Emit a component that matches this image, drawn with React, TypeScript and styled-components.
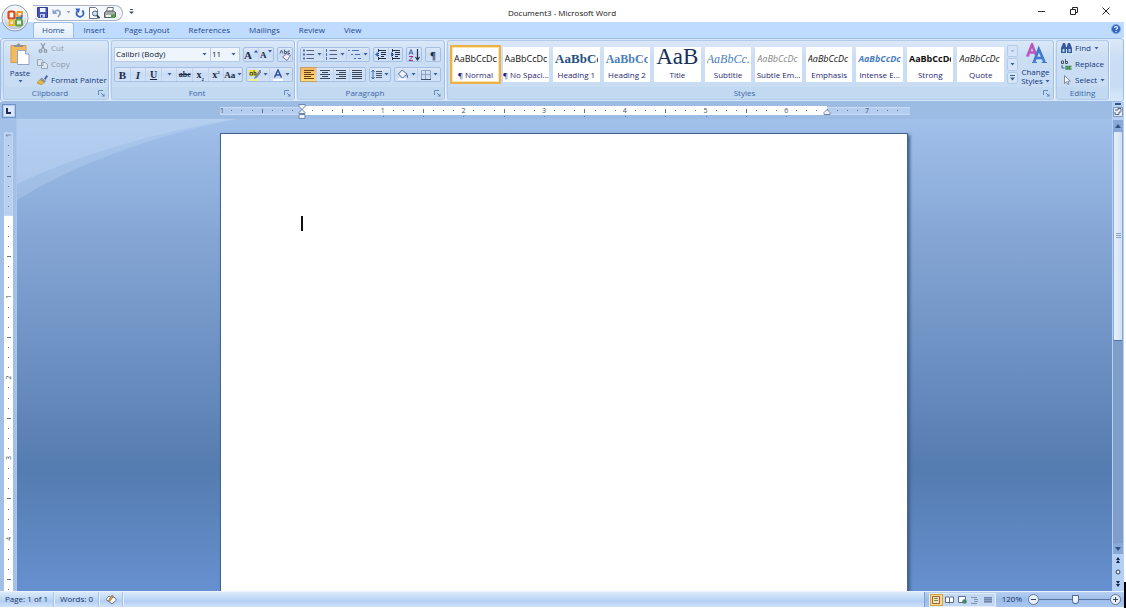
import React from "react";
import styled, { createGlobalStyle, css } from "styled-components";

const GlobalStyle = createGlobalStyle`
  * { box-sizing: border-box; }
  html, body, #root { height: 100%; }
  body { margin: 0; background: #fff; overflow: hidden; }
  body, button, select, input { font-family: "Open Sans", "Noto Sans", sans-serif; font-size: 8px; line-height: 12px; }
  button { padding: 0; margin: 0; border: 0; background: none; color: inherit; }
  svg { display: block; flex: none; }
`;

const Shell = styled.div`
  position: relative;
  display: flex;
  flex-direction: column;
  height: 100%;
  padding: 0 2px 1px 0;
  color: #17387a;
`;

/* Title bar */
const TitleBar = styled.header`
  display: grid;
  grid-template-columns: 1fr auto 1fr;
  align-items: center;
  height: 22px;
  flex: none;
  background: #fff;
`;
const QuickAccess = styled.div`
  display: flex;
  align-items: center;
  padding-left: 32px;
`;
const QuickTools = styled.div`
  display: flex;
  align-items: center;
  gap: 4px;
  height: 16px;
  margin-top: 3px;
  padding: 0 6px 0 4px;
  border: 1px solid #a9b3c4;
  border-left-color: #fff;
  border-radius: 2px 9px 9px 10px;
  background: #f4f7fc;
`;
const QuickMenu = styled.button`
  margin: 2px 0 0 6px;
`;
const WindowTitle = styled.h1`
  margin: 0;
  padding-top: 3px;
  font-size: 8px;
  font-weight: 400;
  color: #111;
`;
const WindowControls = styled.div`
  display: flex;
  justify-content: flex-end;
  gap: 22px;
  padding-right: 13px;
`;
const OfficeButton = styled.button`
  position: absolute;
  left: 1px;
  top: 4px;
  z-index: 2;
`;

/* Tabs */
const TabRow = styled.nav`
  display: flex;
  align-items: flex-end;
  gap: 1px;
  height: 16px;
  flex: none;
  padding: 0 3px 0 33px;
  background: #bfdbff;
`;
const Tab = styled.button<{ $active?: boolean }>`
  height: 16px;
  padding: 0 8px 1px;
  line-height: 14px;
  color: #25498c;
  border: 1px solid transparent;
  border-bottom: 0;
  border-radius: 3px 3px 0 0;
  ${(p) => p.$active && css`background: linear-gradient(#f4f9ff, #dfecfb); border-color: #9dbbe3;`}
`;
const HelpButton = styled.button`
  margin: 0 0 4px auto;
`;

/* Ribbon */
const Ribbon = styled.section`
  display: flex;
  gap: 2px;
  height: 64px;
  flex: none;
  padding: 1px 14px 1px 2px;
  border: 1px solid #9dbce6;
  border-radius: 3px;
  background: linear-gradient(#dce9f8, #cbdef4 30%, #c8dcf4 75%, #d8e8fb);
`;
const Group = styled.section<{ $grow?: boolean; $width?: number }>`
  display: flex;
  flex-direction: column;
  ${(p) => (p.$grow ? "flex: 1; min-width: 0;" : `flex: none; width: ${p.$width}px;`)}
  border: 1px solid #b3cbea;
  border-right-color: #a3bfe3;
  border-radius: 3px;
  box-shadow: 1px 0 0 #edf5fe;
  overflow: hidden;
`;
const GroupBody = styled.div<{ $pad?: string }>`
  display: flex;
  flex: 1;
  min-height: 0;
  padding: ${(p) => p.$pad ?? "0"};
`;
const GroupTitle = styled.footer<{ $launch: boolean }>`
  display: grid;
  grid-template-columns: ${(p) => (p.$launch ? "1fr 12px" : "1fr")};
  align-items: center;
  height: 12px;
  background: #c1d9f1;
  color: #3d66a8;
  text-align: center;
  h2 { margin: 0; font-size: 8px; font-weight: 400; line-height: 12px; }
  button { justify-self: end; padding-right: 3px; }
`;
const TallButton = styled.button<{ $width: number }>`
  display: flex;
  flex-direction: column;
  align-items: center;
  width: ${(p) => p.$width}px;
  flex: none;
  padding-top: 2px;
  line-height: 9px;
  white-space: nowrap;
`;
const TallCaption = styled.span`
  padding: 3px 0;
`;
const CommandList = styled.div`
  display: flex;
  flex-direction: column;
  gap: 2px;
  padding-left: 1px;
`;
const Command = styled.button<{ $off?: boolean }>`
  display: flex;
  align-items: center;
  height: 14px;
  white-space: nowrap;
  color: ${(p) => (p.$off ? "#8f99a8" : "#17387a")};
  gap: 3px;
`;
const CommandIcon = styled.span`
  display: flex;
  justify-content: center;
  width: 11px;
`;
const Rows = styled.div`
  display: flex;
  flex-direction: column;
  gap: 5px;
  width: 100%;
`;
const Row = styled.div`
  display: flex;
  gap: 3px;
  height: 15px;
`;
const ButtonSet = styled.div<{ $width: number }>`
  display: flex;
  align-items: stretch;
  width: ${(p) => p.$width}px;
  border: 1px solid #a4bfe3;
  border-radius: 2px;
  background: linear-gradient(#dbe8f8, #c9dcf4 50%, #d2e3f8);
`;
const ToolButton = styled.button<{ $on?: boolean }>`
  display: flex;
  flex: 1;
  align-items: center;
  justify-content: center;
  gap: 2px;
  color: #1d2c48;
  & + & { border-left: 1px solid #c0d3ee; }
  ${(p) => p.$on && css`background: linear-gradient(#f6b766, #ffd978); box-shadow: 0 0 0 1px #c2a16b;`}
`;
const Glyph = styled.span<{ $size?: number; $weight?: number; $italic?: boolean; $line?: string }>`
  font-family: "Liberation Serif", serif;
  font-size: ${(p) => p.$size ?? 10}px;
  font-weight: ${(p) => p.$weight ?? 700};
  font-style: ${(p) => (p.$italic ? "italic" : "normal")};
  text-decoration: ${(p) => p.$line ?? "none"};
  line-height: 12px;
  sub, sup { font-size: 5px; line-height: 1px; }
`;
const ComboPair = styled.div`
  display: flex;
`;
const Combo = styled.label<{ $width: number }>`
  display: grid;
  grid-template-columns: 1fr 8px;
  align-items: center;
  width: ${(p) => p.$width}px;
  border: 1px solid #b6cbe8;
  background: #eef5fd;
  & + & { border-left: 0; }
  & > * { grid-row: 1; }
  & > svg { grid-column: 2; pointer-events: none; }
`;
const Select = styled.select`
  grid-column: 1 / 3;
  appearance: none;
  width: 100%;
  height: 13px;
  padding: 0 0 1px 1px;
  border: 0;
  background: transparent;
  color: #111c30;
`;

/* Style gallery */
const Gallery = styled.div`
  display: flex;
  flex: 1;
  gap: 4px;
  min-width: 0;
  padding: 4px 3px 0 0;
`;
const StyleTile = styled.button<{ $on?: boolean }>`
  display: flex;
  flex-direction: column;
  align-items: center;
  flex: 1 1 0;
  min-width: 0;
  height: 35px;
  margin-top: 2px;
  padding: 0 2px;
  background: #fff;
  overflow: hidden;
  ${(p) => p.$on && css`outline: 2px solid #eeb04b; box-shadow: inset 0 0 0 1px #ffe6a0;`}
`;
const Sample = styled.span<{ $face?: string; $size?: number; $color?: string; $bold?: boolean; $italic?: boolean }>`
  width: 100%;
  height: 22px;
  overflow: hidden;
  white-space: nowrap;
  text-align: left;
  line-height: ${(p) => ((p.$size ?? 9) > 20 ? 20 : 24)}px;
  font-family: ${(p) => (p.$face === "serif" ? `"Liberation Serif", serif` : `"Open Sans", sans-serif`)};
  font-size: ${(p) => p.$size ?? 9}px;
  color: ${(p) => p.$color ?? "#111"};
  font-weight: ${(p) => (p.$bold ? 700 : 400)};
  font-style: ${(p) => (p.$italic ? "italic" : "normal")};
`;
const TileName = styled.span`
  line-height: 12px;
  white-space: nowrap;
  color: #1f1f70;
`;
const GalleryScroll = styled.div`
  display: flex;
  flex-direction: column;
  gap: 1px;
  width: 11px;
  height: 39px;
  margin-top: 4px;
  button {
    display: flex;
    flex: 1;
    align-items: center;
    justify-content: center;
    border: 1px solid #b4cbea;
    border-radius: 2px;
    background: #d5e4f7;
  }
`;

/* Rulers and work area */
const Main = styled.main`
  display: grid;
  grid-template-columns: 17px 1fr 12px;
  grid-template-rows: 17px 1fr;
  flex: 1;
  min-height: 0;
`;
const Corner = styled.div`
  display: flex;
  align-items: center;
  justify-content: center;
  background: #9dbce4;
`;
const TabStop = styled.button`
  display: flex;
  width: 14px;
  height: 14px;
  align-items: center;
  justify-content: center;
  border: 1px solid #6f93c6;
  background: #dbe8f9;
  box-shadow: inset 0 0 0 1px #b5cdec;
`;
const RulerBar = styled.div`
  display: flex;
  justify-content: center;
  overflow: hidden;
  background: #9dbce4;
`;
const SideRuler = styled.div`
  overflow: hidden;
  padding-left: 4px;
  background: #a3c1e8;
  border-right: 1px solid #a9c6ee;
`;
const Desk = styled.div`
  position: relative;
  display: flex;
  justify-content: center;
  overflow: hidden;
  padding: 14px 1px 0 0;
  background: linear-gradient(#a1c0ea, #84a5d4 26%, #557cb0 74%, #6690cf);
`;
const Sweep = styled.svg`
  position: absolute;
  left: 0;
  top: 0;
`;
const Paper = styled.article`
  position: relative;
  width: 688px;
  padding: 82px 80px 0;
  border: solid #43648f;
  border-width: 1px 1px 0 1px;
  background: #fff;
  box-shadow: 2px 2px 3px #3c5f8f;
`;
const TextCursor = styled.div`
  width: 2px;
  height: 15px;
  background: #111;
`;
const ScrollColumn = styled.div`
  display: flex;
  flex-direction: column;
  align-items: center;
  padding: 1px;
  background: #b4d0f5;
`;
const ScrollButton = styled.button<{ $dark?: boolean }>`
  display: flex;
  flex: none;
  align-items: center;
  justify-content: center;
  width: 10px;
  height: ${(p) => (p.$dark ? 11 : 12)}px;
  background: ${(p) => (p.$dark ? "#88a9d7" : "transparent")};
`;
const Track = styled.div`
  flex: 1;
  width: 10px;
  background: #7f9fca;
`;
const Thumb = styled.div`
  display: flex;
  align-items: center;
  justify-content: center;
  height: 51%;
  border: 1px solid #8aa8d2;
  border-bottom-color: #56749f;
  border-radius: 2px;
  background: linear-gradient(90deg, #e8f1fc, #d0e0f5);
`;

/* Status bar */
const StatusBar = styled.footer`
  display: flex;
  align-items: stretch;
  height: 16px;
  flex: none;
  border-top: 1px solid #e9f2fd;
  background: linear-gradient(#dceafb, #c2daf7 40%, #b3cff3 60%, #cfe2fa);
  color: #1c3766;
  line-height: 14px;
`;
const StatusItem = styled.div`
  display: flex;
  align-items: center;
  padding: 0 5px 1px;
  border-right: 1px solid #a7c3e8;
  box-shadow: 1px 0 0 #e4effc;
  & + & { padding-left: 6px; }
`;
const StatusRight = styled.div`
  display: flex;
  align-items: center;
  gap: 6px;
  margin-left: auto;
  padding: 0 3px 0 4px;
  border-left: 1px solid #7f9fcc;
  background: linear-gradient(#b7d0f2, #9dbde9 50%, #a9c7ef);
`;
const Views = styled.div`
  display: flex;
  border: 1px solid #e1edfb;
  background: #c3d8f3;
`;
const ViewButton = styled.button<{ $on?: boolean }>`
  display: flex;
  align-items: center;
  justify-content: center;
  width: 13px;
  height: 12px;
  ${(p) => p.$on && css`background: #fcd68a; box-shadow: inset 0 0 0 1px #d6a24c;`}
`;
const Zoom = styled.label`
  display: flex;
  align-items: center;
`;
const ZoomValue = styled.span`
  padding: 0 6px 1px 0;
`;
const Slider = styled.input`
  appearance: none;
  width: 71px;
  height: 12px;
  margin: 0;
  background: linear-gradient(#56759f, #56759f) center / 100% 1px no-repeat;
  &::-webkit-slider-thumb {
    appearance: none;
    width: 7px;
    height: 9px;
    border: 1px solid #4d6c9b;
    border-radius: 1px 1px 4px 4px;
    background: #eef4fc;
  }
`;
const WindowEdge = styled.div`
  position: absolute;
  right: 0;
  bottom: 0;
  width: 2px;
  height: 26px;
  background: #000;
`;

const InlineCaret = styled.svg`
  display: inline;
`;

const Caret = ({ c = "#3b5f99" }: { c?: string }) => (
  <svg width="5" height="3" viewBox="0 0 5 3"><path d="M.5 0h4L2.500 2.500z" fill={c} /></svg>
);
const Launcher = () => (
  <svg width="7" height="7" viewBox="0 0 7 7" fill="none" stroke="#6888b8"><path d="M.5 5V.5H5M3 3l2.500 2.500" /><path d="M6.500 3.500v3h-3z" fill="#6888b8" stroke="none" /></svg>
);

const OfficeLogo = () => (
  <svg width="28" height="28" viewBox="0 0 28 28">
    <defs>
      <radialGradient id="orb" cx=".5" cy=".3" r=".75">
        <stop offset="0" stopColor="#fff" /><stop offset=".55" stopColor="#e3e8f1" /><stop offset="1" stopColor="#9aa9c2" />
      </radialGradient>
    </defs>
    <circle cx="14" cy="14" r="13" fill="url(#orb)" stroke="#8798b5" />
    <circle cx="14" cy="14" r="12" fill="none" stroke="#f8fafd" />
    <g fill="none" strokeWidth="2.200">
      <rect x="7.500" y="7.500" width="6" height="7" rx="1.500" stroke="#d9481c" />
      <path d="M14.500 10.500h2V8h4.500v4.500h-5.500" stroke="#ef9c28" strokeWidth="1.800" />
      <path d="M14.500 14h6v-3" stroke="#3a74c4" strokeWidth="1.800" />
      <path d="M13 15.500v5.500H8.500v-4.500h3" stroke="#f0b420" strokeWidth="1.800" />
      <rect x="15" y="15.500" width="6" height="6" rx="1.500" stroke="#64a33a" strokeWidth="2" />
    </g>
  </svg>
);
const SaveIcon = () => (
  <svg width="11" height="11" viewBox="0 0 11 11"><path d="M.5.5h10v10h-9l-1-1z" fill="#4655b5" stroke="#303c93" /><path d="M3 1h5.500v4H3z" fill="#f2f5fc" /><path d="M3 7h5v3.500H3z" fill="#c9cfe6" /><path d="M4 8h1.500v2H4z" fill="#303c93" /></svg>
);
const UndoIcon = () => (
  <svg width="10" height="10" viewBox="0 0 10 10" fill="none" stroke="#8fa3c7" strokeWidth="1.800"><path d="M2.500 3.800C4.500 1.500 8 2 8.200 4.800c.1 1.800-1 3.200-2.400 4.200" /><path d="M.5 1v5h5z" fill="#8fa3c7" stroke="none" /></svg>
);
const RedoIcon = () => (
  <svg width="10" height="10" viewBox="0 0 10 10" fill="none" stroke="#3464bd" strokeWidth="1.800"><path d="M2.500 2.800A3.500 3.500 0 1 0 7.200 2.500" /><path d="M0 .5h5L3.800 5z" fill="#3464bd" stroke="none" /></svg>
);
const PreviewIcon = () => (
  <svg width="11" height="12" viewBox="0 0 11 12" fill="none"><path d="M.5.5h6l2 2v9h-8z" fill="#fff" stroke="#68768e" /><circle cx="6" cy="6.500" r="2.500" fill="#cfe5fa" stroke="#4d5f7d" /><path d="M8 8.500l2.500 2.500" stroke="#3d4653" strokeWidth="1.800" /></svg>
);
const PrinterIcon = () => (
  <svg width="12" height="12" viewBox="0 0 12 12"><path d="M3.500.5h6l-1 4h-6z" fill="#fff" stroke="#70757c" /><path d="M.5 5.500l2-1.500h7l2 1.500v4l-2 1h-9z" fill="#a6aaa6" stroke="#55595c" /><path d="M2 8h6v2H2z" fill="#eceef0" /><path d="M7 7.500h4v3.500H7z" fill="#4c9b45" /></svg>
);
const PasteIcon = () => (
  <svg width="20" height="22" viewBox="0 0 20 22"><path d="M1 2.500h15v17H1z" fill="#f2bb60" stroke="#d39c42" /><path d="M4 4h9V2h-2.500L8.500 0 6.500 2H4z" fill="#8a8f99" /><path d="M7.500 7.500h8l3.500 3.500v10.500H7.500z" fill="#fff" stroke="#93a5c3" /><path d="M15.500 7.500V11H19" fill="#dfe7f4" stroke="#93a5c3" /></svg>
);
const CutIcon = () => (
  <svg width="10" height="10" viewBox="0 0 10 10" fill="none" stroke="#8f99a8" strokeWidth="1.200"><path d="M3 0l3.500 6.500M7 0L3.500 6.500" /><circle cx="2.500" cy="8" r="1.400" /><circle cx="7.500" cy="8" r="1.400" /></svg>
);
const CopyIcon = () => (
  <svg width="11" height="10" viewBox="0 0 11 10" fill="#dfe5ee" stroke="#99a4b5"><path d="M.5.5h4l1.500 1.500v4.500h-5.500zM4.500 3.500h4l2 2v4h-6z" /></svg>
);
const BrushIcon = () => (
  <svg width="11" height="10" viewBox="0 0 11 10"><path d="M7 3.500L9.500 0 11 1.200 8.500 5z" fill="#4f66a5" /><path d="M4.500 2.500l4.500 3.500-1.500 2L3 4.500z" fill="#8a94a8" /><path d="M3 4.500l4 3L4.500 10 0 8z" fill="#e6ba3e" stroke="#a8802a" strokeWidth=".6" /></svg>
);
const ListIcon = ({ kind }: { kind: "dot" | "num" | "tree" }) => (
  <svg width="13" height="11" viewBox="0 0 13 11" stroke="#4b6fae" fill="none">
    {kind === "tree" ? (
      <path d="M0 1.500h2M4 1.500h7M3 5.500h2M7 5.500h5M6 9.500h2M10 9.500h3" />
    ) : (
      <>
        <path d="M4.500 1.500H12M4.500 5.500H12M4.500 9.500H12" stroke="#51617c" />
        <path d={kind === "dot" ? "M1 1.500h2M1 5.500h2M1 9.500h2" : "M1.500 0v3M1.500 4v3M1.500 8v3"} strokeWidth={kind === "dot" ? 2 : 1} />
      </>
    )}
  </svg>
);
const IndentIcon = ({ right }: { right?: boolean }) => (
  <svg width="12" height="11" viewBox="0 0 12 11" fill="none" stroke="#23304a"><path d="M3 1.500h8M6 3.500h5M6 5.500h5M6 7.500h3M3 9.500h8" /><path d={right ? "M5 5.500L2 3v5z" : "M0 5.500L3 3v5z"} fill="#3868b8" stroke="none" /><path d="M3.500 0v11" strokeDasharray="1 1" /></svg>
);
const SortIcon = () => (
  <svg width="12" height="12" viewBox="0 0 12 12" fill="none"><path d="M1 5.500L3 .5l2 5M1.800 4h2.500" stroke="#3f62b0" /><path d="M1 7.500h4L1 11.500h4" stroke="#8d3a80" /><path d="M9.500 0v10M7.500 8l2 3 2-3" stroke="#23304a" strokeWidth="1.200" /></svg>
);
const AlignIcon = ({ d, c = "#3b4658" }: { d: string; c?: string }) => (
  <svg width="10" height="9" viewBox="0 0 10 9" stroke={c} fill="none"><path d={d} /></svg>
);
const SpacingIcon = () => (
  <svg width="11" height="11" viewBox="0 0 11 11" fill="none"><path d="M5 2.500h6M5 4.500h6M5 6.500h6M5 8.500h6" stroke="#4c5669" /><path d="M2 1v9M.5 3L2 1l1.500 2M.5 8L2 10l1.500-2" stroke="#3f6ab3" /></svg>
);
const BucketIcon = () => (
  <svg width="12" height="11" viewBox="0 0 12 11"><path d="M5 1l5 4-4.500 4-4-4z" fill="#eef3fa" stroke="#5b6f92" /><path d="M9.500 5c2 1 1.500 3 1.500 4-1 0-1.500-2-1.500-4z" fill="#3f6ab3" /><path d="M1 9.500h8v1.500H1z" fill="#fff" /></svg>
);
const BorderIcon = () => (
  <svg width="10" height="10" viewBox="0 0 10 10" fill="none" stroke="#8fa1bf"><path d="M.5.5h9v9h-9zM4.500 .5v9M.5 4.500h9" /><path d="M0 9.500h10" stroke="#3c4c69" /></svg>
);
const EraserIcon = () => (
  <svg width="12" height="12" viewBox="0 0 12 12" fill="none"><path d="M1 4.500L2.500 1 4 4.500M5.500.5v4h2v-2h-2M11 2H9v2.500h2" stroke="#44516a" strokeWidth=".9" /><path d="M3.500 8l4-3 4 1.500-3.500 5z" fill="#f5f0fa" stroke="#7a7f9c" /></svg>
);
const HighlightIcon = () => (
  <svg width="12" height="12" viewBox="0 0 12 12" fill="none"><path d="M0 1h8v6H0z" fill="#f0e43a" /><path d="M1 3.500h2.500v2.500H1zM5 1.500V6h2V3.500H5" stroke="#3a432c" strokeWidth=".9" /><path d="M11 1L7 7l-1.500 2.500L8 8l4-5z" fill="#8c93a5" stroke="#4c566e" strokeWidth=".6" /><path d="M0 10h9v2H0z" fill="#f0f28c" /></svg>
);
const FontColorIcon = () => (
  <svg width="10" height="12" viewBox="0 0 10 12" fill="none"><path d="M1.500 8.500L5 1l3.500 7.500M3 6h4" stroke="#34549c" strokeWidth="1.500" /><path d="M0 10h10v2H0z" fill="#fff" /></svg>
);
const ChangeStylesIcon = () => (
  <svg width="22" height="21" viewBox="0 0 22 21" fill="none"><path d="M2.500 13L7 1.500 11 12M4 9.500h6" stroke="#b658bd" strokeWidth="2.600" /><path d="M1 13h3.500" stroke="#b658bd" /><path d="M9 19L13.800 6l5.700 13M11 15h6.500" stroke="#3e7bcd" strokeWidth="2.600" /><path d="M7 19.500h5M16.500 19.500H22" stroke="#3e7bcd" /></svg>
);
const FindIcon = () => (
  <svg width="11" height="10" viewBox="0 0 11 10" fill="#345b9e"><path d="M2 0h2l1 3v7H0V5zM7 0h2l2 5v5H6V3zM4 4h3v2H4z" /><path d="M1.500 6h2v3h-2zM7.500 6h2v3h-2z" fill="#b5cdef" /></svg>
);
const ReplaceIcon = () => (
  <svg width="11" height="11" viewBox="0 0 11 11" fill="none" strokeWidth="1"><path d="M.5 2h2v2.500h-2zM4.500 0v4.500h2V2.500h-2" stroke="#4a5568" /><path d="M1 6v3h2.500" stroke="#345b9e" /><path d="M5 7.500h2V10H5zM10.500 7.500H8.500V10h2" stroke="#3a8a4a" strokeWidth="1.300" /></svg>
);
const SelectIcon = () => (
  <svg width="11" height="10" viewBox="0 0 11 10"><path d="M3.500.5v8l2-1.800L6.800 9.500l1.200-.5-1.200-2.800h2.500z" fill="#fff" stroke="#67748c" strokeWidth=".8" /></svg>
);

const ticks = (from: number, to: number) => {
  const out: number[] = [];
  for (let i = from; i <= to; i++) if (i % 8) out.push(i);
  return out;
};

/* Ticks fall on every eighth of an inch, an inch being 80.7 units. */
const HorizontalRuler = () => {
  const at = (n: number) => 82 + (n * 80.700) / 8;
  return (
    <svg width="690" height="17" viewBox="0 0 690 17">
      <path d="M0 5h690v8H0z" fill="#b5cdee" />
      <path d="M82 4h525v9H82z" fill="#fff" />
      <path d="M0 5.500h82M607 5.500h83M0 12.500h82M607 12.500h83" stroke="#c9dcf5" />
      {ticks(-7, 59).map((i) => (
        <rect key={i} x={Math.round(at(i))} y={i % 4 ? 8 : 7} width="1" height={i % 4 ? 1 : 4} fill="#66758e" />
      ))}
      {[1, 2, 3, 4, 5, 6, 7, 8, 9, 10, 11, 12].map((i) => <rect key={i} x={Math.round(at(i * 4))} y="14" width="1" height="1" fill="#5c7fb2" />)}
      <g fontSize="7" fill="#44536c" textAnchor="middle">
        {[-1, 1, 2, 3, 4, 5, 6, 7].map((n) => <text key={n} x={Math.max(at(n * 8), 2)} y="11">{Math.abs(n)}</text>)}
      </g>
      <g fill="#eef3fa" stroke="#7286a8">
        <path d="M79 2.500h6v2l-3 3-3-3zM82 7.500l3 3v1h-6v-1zM79 12.500h6v4h-6zM607 7.500l3 3v2h-6v-2z" />
      </g>
    </svg>
  );
};

const VerticalRuler = () => {
  const at = (n: number) => 97 + (n * 80.700) / 8;
  return (
    <svg width="9" height="900" viewBox="0 0 9 900">
      <path d="M0 14h9v83H0z" fill="#b9d0f0" stroke="#cadcf5" />
      <path d="M0 97h9v803H0z" fill="#fff" />
      {ticks(-7, 78).map((i) => (
        <rect key={i} x={i % 4 ? 4 : 3} y={Math.round(at(i))} width={i % 4 ? 1 : 4} height="1" fill="#66758e" />
      ))}
      <g fontSize="7" fill="#44536c" textAnchor="middle">
        {[-1, 1, 2, 3, 4, 5, 6, 7, 8, 9].map((n) => (
          <text key={n} transform={`translate(7 ${at(n * 8)}) rotate(-90)`}>{Math.abs(n)}</text>
        ))}
      </g>
    </svg>
  );
};

type StyleDef = { name: string; text?: string; on?: boolean; face?: string; size?: number; color?: string; bold?: boolean; italic?: boolean };
const STYLES: StyleDef[] = [
  { name: "¶ Normal", on: true },
  { name: "¶ No Spaci..." },
  { name: "Heading 1", text: "AaBbCc", face: "serif", size: 13, color: "#27517f", bold: true },
  { name: "Heading 2", text: "AaBbCc", face: "serif", size: 12, color: "#4a80bd", bold: true },
  { name: "Title", text: "AaB", face: "serif", size: 23, color: "#17305a" },
  { name: "Subtitle", text: "AaBbCc.", face: "serif", size: 12, color: "#4a80bd", italic: true },
  { name: "Subtle Em...", color: "#868686", italic: true },
  { name: "Emphasis", italic: true },
  { name: "Intense E...", color: "#4a80bd", bold: true, italic: true },
  { name: "Strong", bold: true },
  { name: "Quote", italic: true },
];

const TABS = ["Home", "Insert", "Page Layout", "References", "Mailings", "Review", "View"];

const Title = ({ children, launch = true }: { children: string; launch?: boolean }) => (
  <GroupTitle $launch={launch}>
    <h2>{children}</h2>
    {launch && <button aria-label={`${children} options`}><Launcher /></button>}
  </GroupTitle>
);

export default function App() {
  return (
    <Shell>
      <GlobalStyle />
      <TitleBar>
        <QuickAccess>
          <QuickTools>
            <button aria-label="Save"><SaveIcon /></button>
            <button aria-label="Undo"><UndoIcon /></button>
            <button aria-label="Undo history"><Caret c="#9aa9c2" /></button>
            <button aria-label="Redo"><RedoIcon /></button>
            <button aria-label="Print preview"><PreviewIcon /></button>
            <button aria-label="Print"><PrinterIcon /></button>
          </QuickTools>
          <QuickMenu aria-label="Customize toolbar">
            <svg width="5" height="6" viewBox="0 0 5 6"><path d="M1 0h3v1H1zM0 2.500h5L2.500 5z" fill="#3c4c69" /></svg>
          </QuickMenu>
        </QuickAccess>
        <WindowTitle>Document3 - Microsoft Word</WindowTitle>
        <WindowControls>
          <button aria-label="Minimize"><svg width="10" height="10" viewBox="0 0 10 10"><path d="M1 5h7v1H1z" fill="#333" /></svg></button>
          <button aria-label="Restore"><svg width="10" height="10" viewBox="0 0 10 10" fill="none" stroke="#222"><path d="M1.500 3.500h5v5h-5zM3.500 3V1.500h5v5H7" /></svg></button>
          <button aria-label="Close"><svg width="10" height="10" viewBox="0 0 10 10" stroke="#222"><path d="M1.500 1.500l7 7M8.500 1.500l-7 7" /></svg></button>
        </WindowControls>
      </TitleBar>
      <OfficeButton aria-label="Office menu"><OfficeLogo /></OfficeButton>

      <TabRow>
        {TABS.map((t, i) => <Tab key={t} $active={i === 0}>{t}</Tab>)}
        <HelpButton aria-label="Help">
          <svg width="10" height="10" viewBox="0 0 10 10"><circle cx="5" cy="5" r="4.500" fill="#2f62c9" stroke="#7fa0dd" /><path d="M3.500 4c0-2 3-2 3 0 0 1-1.500 1-1.500 2M5 7v1" stroke="#fff" fill="none" strokeWidth="1.200" /></svg>
        </HelpButton>
      </TabRow>

      <Ribbon>
        <Group $width={106}>
          <GroupBody>
            <TallButton $width={32}>
              <PasteIcon />
              <TallCaption>Paste</TallCaption>
              <Caret />
            </TallButton>
            <CommandList>
              <Command $off><CommandIcon><CutIcon /></CommandIcon>Cut</Command>
              <Command $off><CommandIcon><CopyIcon /></CommandIcon>Copy</Command>
              <Command><CommandIcon><BrushIcon /></CommandIcon>Format Painter</Command>
            </CommandList>
          </GroupBody>
          <Title>Clipboard</Title>
        </Group>

        <Group $width={184}>
          <GroupBody $pad="6px 1px 0 2px">
            <Rows>
              <Row>
                <ComboPair>
                  <Combo $width={97}>
                    <Select aria-label="Font"><option>Calibri (Body)</option></Select><Caret />
                  </Combo>
                  <Combo $width={29}>
                    <Select aria-label="Font size"><option>11</option></Select><Caret />
                  </Combo>
                </ComboPair>
                <ButtonSet $width={32}>
                  <ToolButton aria-label="Grow font"><Glyph $size={11}>A</Glyph><svg width="4" height="9" viewBox="0 0 4 9"><path d="M0 2.500L2 0l2 2.500z" fill="#34549c" /></svg></ToolButton>
                  <ToolButton aria-label="Shrink font"><Glyph $size={9}>A</Glyph><svg width="4" height="9" viewBox="0 0 4 9"><path d="M0 0h4L2 2.500z" fill="#34549c" /></svg></ToolButton>
                </ButtonSet>
                <ButtonSet $width={16}><ToolButton aria-label="Clear formatting"><EraserIcon /></ToolButton></ButtonSet>
              </Row>
              <Row>
                <ButtonSet $width={130}>
                  <ToolButton><Glyph $size={11}>B</Glyph></ToolButton>
                  <ToolButton><Glyph $size={11} $italic>I</Glyph></ToolButton>
                  <ToolButton><Glyph $size={10} $line="underline">U</Glyph></ToolButton>
                  <ToolButton aria-label="Underline style"><Caret /></ToolButton>
                  <ToolButton><Glyph $size={8} $line="line-through">abc</Glyph></ToolButton>
                  <ToolButton><Glyph>x<sub>2</sub></Glyph></ToolButton>
                  <ToolButton><Glyph>x<sup>2</sup></Glyph></ToolButton>
                  <ToolButton><Glyph $size={9}>Aa</Glyph><Caret /></ToolButton>
                </ButtonSet>
                <ButtonSet $width={47}>
                  <ToolButton aria-label="Highlight"><HighlightIcon /><Caret /></ToolButton>
                  <ToolButton aria-label="Font color"><FontColorIcon /><Caret /></ToolButton>
                </ButtonSet>
              </Row>
            </Rows>
          </GroupBody>
          <Title>Font</Title>
        </Group>

        <Group $width={148}>
          <GroupBody $pad="6px 1px 0 2px">
            <Rows>
              <Row>
                <ButtonSet $width={70}>
                  <ToolButton aria-label="Bullets"><ListIcon kind="dot" /><Caret /></ToolButton>
                  <ToolButton aria-label="Numbering"><ListIcon kind="num" /><Caret /></ToolButton>
                  <ToolButton aria-label="Multilevel list"><ListIcon kind="tree" /><Caret /></ToolButton>
                </ButtonSet>
                <ButtonSet $width={30}>
                  <ToolButton aria-label="Decrease indent"><IndentIcon /></ToolButton>
                  <ToolButton aria-label="Increase indent"><IndentIcon right /></ToolButton>
                </ButtonSet>
                <ButtonSet $width={16}><ToolButton aria-label="Sort"><SortIcon /></ToolButton></ButtonSet>
                <ButtonSet $width={16}><ToolButton><Glyph $size={11}>¶</Glyph></ToolButton></ButtonSet>
              </Row>
              <Row>
                <ButtonSet $width={66}>
                  <ToolButton $on aria-label="Align left"><AlignIcon c="#6b3f14" d="M0 .5h10M0 2.500h7M0 4.500h10M0 6.500h7M0 8.500h10" /></ToolButton>
                  <ToolButton aria-label="Center"><AlignIcon d="M0 .5h10M2 2.500h6M0 4.500h10M2 6.500h6M0 8.500h10" /></ToolButton>
                  <ToolButton aria-label="Align right"><AlignIcon d="M0 .5h10M3 2.500h7M0 4.500h10M3 6.500h7M0 8.500h10" /></ToolButton>
                  <ToolButton aria-label="Justify"><AlignIcon d="M0 .5h10M0 2.500h10M0 4.500h10M0 6.500h10M0 8.500h10" /></ToolButton>
                </ButtonSet>
                <ButtonSet $width={22}><ToolButton aria-label="Line spacing"><SpacingIcon /><Caret /></ToolButton></ButtonSet>
                <ButtonSet $width={47}>
                  <ToolButton aria-label="Shading"><BucketIcon /><Caret /></ToolButton>
                  <ToolButton aria-label="Borders"><BorderIcon /><Caret /></ToolButton>
                </ButtonSet>
              </Row>
            </Rows>
          </GroupBody>
          <Title>Paragraph</Title>
        </Group>

        <Group $grow>
          <GroupBody $pad="0 0 0 4px">
            <Gallery>
              {STYLES.map((s) => (
                <StyleTile key={s.name} $on={s.on}>
                  <Sample $face={s.face} $size={s.size} $color={s.color} $bold={s.bold} $italic={s.italic}>{s.text ?? "AaBbCcDc"}</Sample>
                  <TileName>{s.name}</TileName>
                </StyleTile>
              ))}
            </Gallery>
            <GalleryScroll>
              <button aria-label="Previous styles"><Caret c="#a9b9d2" /></button>
              <button aria-label="Next styles"><Caret /></button>
              <button aria-label="More styles"><svg width="5" height="6" viewBox="0 0 5 6"><path d="M0 0h5v1H0zM0 2.500h5L2.500 5.500z" fill="#3b5f99" /></svg></button>
            </GalleryScroll>
            <TallButton $width={35}>
              <ChangeStylesIcon />
              <TallCaption>Change<br />Styles <InlineCaret width="5" height="4" viewBox="0 0 5 4"><path d="M.5 0h4L2.500 2.500z" fill="#3b5f99" /></InlineCaret></TallCaption>
            </TallButton>
          </GroupBody>
          <Title>Styles</Title>
        </Group>

        <Group $width={53}>
          <GroupBody $pad="0 0 0 3px">
            <CommandList>
              <Command><CommandIcon><FindIcon /></CommandIcon>Find <Caret /></Command>
              <Command><CommandIcon><ReplaceIcon /></CommandIcon>Replace</Command>
              <Command><CommandIcon><SelectIcon /></CommandIcon>Select <Caret /></Command>
            </CommandList>
          </GroupBody>
          <Title launch={false}>Editing</Title>
        </Group>
      </Ribbon>

      <Main>
        <Corner><TabStop aria-label="Tab stop type"><svg width="6" height="6" viewBox="0 0 6 6"><path d="M1 0v5h4" stroke="#1d2c58" strokeWidth="2" fill="none" /></svg></TabStop></Corner>
        <RulerBar><HorizontalRuler /></RulerBar>
        <ScrollColumn>
          <svg width="10" height="15" viewBox="0 0 10 15"><path d="M2 0h6v2H2z" fill="#3a5480" /><path d="M.5 4.500h9v9h-9z" fill="#e7eef9" stroke="#7f97bd" /><path d="M2 7h3V5.500h3v3M2 9v2.500h4V9h2" stroke="#55657f" fill="none" /></svg>
        </ScrollColumn>
        <SideRuler><VerticalRuler /></SideRuler>
        <Desk>
          <Sweep width="240" height="90" viewBox="0 0 240 90">
            <path d="M0 0h220Q90 26 0 81z" fill="#c5dcf5" fillOpacity=".3" />
            <path d="M0 0h218Q90 22 0 65z" fill="#c5dcf5" fillOpacity=".35" />
          </Sweep>
          <Paper><TextCursor /></Paper>
        </Desk>
        <ScrollColumn>
          <ScrollButton $dark aria-label="Scroll up"><svg width="6" height="4" viewBox="0 0 6 4"><path d="M0 4l3-4 3 4z" fill="#35527f" /></svg></ScrollButton>
          <Track><Thumb><svg width="5" height="6" viewBox="0 0 5 6"><path d="M0 .5h5M0 2.500h5M0 4.500h5" stroke="#8ea3c2" /></svg></Thumb></Track>
          <ScrollButton $dark aria-label="Scroll down"><svg width="6" height="4" viewBox="0 0 6 4"><path d="M0 0h6L3 4z" fill="#35527f" /></svg></ScrollButton>
          <ScrollButton aria-label="Previous page"><svg width="4" height="6" viewBox="0 0 4 6"><path d="M0 3l2-3 2 3zM0 6l2-3 2 3z" fill="#14233f" /></svg></ScrollButton>
          <ScrollButton aria-label="Browse object"><svg width="6" height="6" viewBox="0 0 6 6"><circle cx="3" cy="3" r="2" fill="#e8eef8" stroke="#2c3d5c" /></svg></ScrollButton>
          <ScrollButton aria-label="Next page"><svg width="4" height="6" viewBox="0 0 4 6"><path d="M0 0h4L2 3zM0 3h4L2 6z" fill="#14233f" /></svg></ScrollButton>
        </ScrollColumn>
      </Main>

      <StatusBar>
        <StatusItem>Page: 1 of 1</StatusItem>
        <StatusItem>Words: 0</StatusItem>
        <StatusItem>
          <svg width="12" height="11" viewBox="0 0 12 11"><path d="M1 5.500l3-3.500 2 1.500L9 3l2.500 3L7 10z" fill="#fff" stroke="#68738a" /><path d="M3 7l4-6 1.500 1L5 7.500z" fill="#d59a4b" stroke="#7e5c31" strokeWidth=".5" /></svg>
        </StatusItem>
        <StatusRight>
          <Views>
            <ViewButton $on aria-label="Print layout"><svg width="8" height="8" viewBox="0 0 8 8"><path d="M.5.5h7v7h-7z" fill="#f6e3b8" stroke="#8c6b3b" /><path d="M2 2.500h4M2 4.500h4" stroke="#8c7b63" /></svg></ViewButton>
            <ViewButton aria-label="Reading"><svg width="9" height="8" viewBox="0 0 9 8" fill="#fff" stroke="#5b6f8f"><path d="M.5 1h3.500l.5.5.5-.5h3.500v5.500H5l-.5.500-.5-.5H.5zM4.500 1.500v6" /></svg></ViewButton>
            <ViewButton aria-label="Web layout"><svg width="9" height="8" viewBox="0 0 9 8"><path d="M.5.5h7v6h-7z" fill="#fff" stroke="#5b6f8f" /><circle cx="6.500" cy="5.500" r="2.300" fill="#47866a" /></svg></ViewButton>
            <ViewButton aria-label="Outline"><svg width="8" height="8" viewBox="0 0 8 8" stroke="#7e93b5"><path d="M0 1.500h6M3 3.500h4M3 5.500h4M0 7.500h6" /></svg></ViewButton>
            <ViewButton aria-label="Draft"><svg width="8" height="8" viewBox="0 0 8 8"><path d="M0 1h8v6H0z" fill="#8ea3c4" /><path d="M0 1.500h8M0 3.500h8M0 5.500h8" stroke="#7085a8" /></svg></ViewButton>
          </Views>
          <Zoom>
            <ZoomValue>120%</ZoomValue>
            <svg width="11" height="11" viewBox="0 0 11 11"><circle cx="5.500" cy="5.500" r="5" fill="#eaf1fb" stroke="#5f7698" /><path d="M3 5.500h5" stroke="#33475f" /></svg>
            <Slider type="range" min="10" max="190" defaultValue="104" aria-label="Zoom" />
            <svg width="11" height="11" viewBox="0 0 11 11"><circle cx="5.500" cy="5.500" r="5" fill="#eaf1fb" stroke="#5f7698" /><path d="M3 5.500h5M5.500 3v5" stroke="#33475f" /></svg>
          </Zoom>
        </StatusRight>
      </StatusBar>
      <WindowEdge />
    </Shell>
  );
}
